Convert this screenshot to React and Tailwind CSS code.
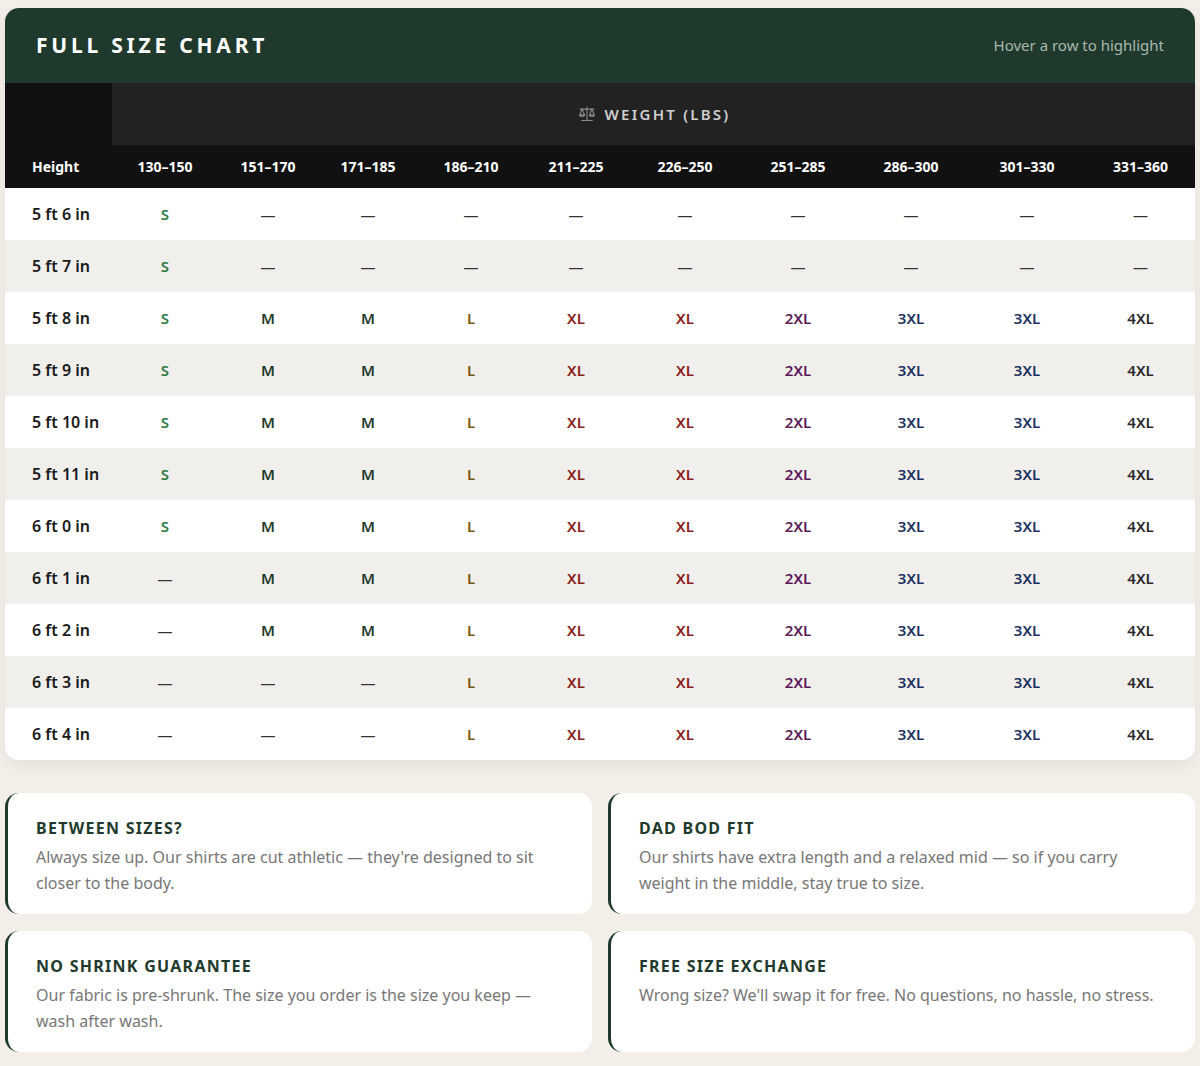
import React from "react";

const cols = ["130–150", "151–170", "171–185", "186–210", "211–225", "226–250", "251–285", "286–300", "301–330", "331–360"];
const widths = ["w-[106px]", "w-[100px]", "w-[100px]", "w-[106px]", "w-[104px]", "w-[114px]", "w-[112px]", "w-[114px]", "w-[118px]", "w-[109px]"];

const colour = {
  S: "text-[#2f7a45]",
  M: "text-[#1f3a2b]",
  L: "text-[#7a5510]",
  XL: "text-[#8a1c1c]",
  "2XL": "text-[#5b1a58]",
  "3XL": "text-[#1d3262]",
  "4XL": "text-[#2a2a2a]",
  "—": "text-[#333]",
};

const full = ["M", "M", "L", "XL", "XL", "2XL", "3XL", "3XL", "4XL"];
const rows = [
  ["5 ft 6 in", "S", ...Array(9).fill("—")],
  ["5 ft 7 in", "S", ...Array(9).fill("—")],
  ["5 ft 8 in", "S", ...full],
  ["5 ft 9 in", "S", ...full],
  ["5 ft 10 in", "S", ...full],
  ["5 ft 11 in", "S", ...full],
  ["6 ft 0 in", "S", ...full],
  ["6 ft 1 in", "—", ...full],
  ["6 ft 2 in", "—", ...full],
  ["6 ft 3 in", "—", "—", "—", "L", "XL", "XL", "2XL", "3XL", "3XL", "4XL"],
  ["6 ft 4 in", "—", "—", "—", "L", "XL", "XL", "2XL", "3XL", "3XL", "4XL"],
];

const notes = [
  ["BETWEEN SIZES?", "Always size up. Our shirts are cut athletic — they're designed to sit closer to the body."],
  ["DAD BOD FIT", "Our shirts have extra length and a relaxed mid — so if you carry weight in the middle, stay true to size."],
  ["NO SHRINK GUARANTEE", "Our fabric is pre-shrunk. The size you order is the size you keep — wash after wash."],
  ["FREE SIZE EXCHANGE", "Wrong size? We'll swap it for free. No questions, no hassle, no stress."],
];

const Scale = () => (
  <svg width="20" height="18" viewBox="0 0 24 22" fill="none" stroke="#8a8a8a" strokeWidth="1.4">
    <path d="M12 2v17M5 19h14M3 5h18M6 5l-3 7h6zM18 5l-3 7h6zM3 12a3 2 0 0 0 6 0M15 12a3 2 0 0 0 6 0" />
  </svg>
);

export default function App() {
  return (
    <div className="min-h-[1066px] bg-[#f3efe8] px-[5px] pt-[8px] font-['Inter','Noto_Sans',sans-serif]">
      <div className="overflow-hidden rounded-t-[14px] rounded-b-[14px] bg-white shadow-[0_6px_16px_rgba(0,0,0,0.06)]">
        <div className="flex h-[75px] items-center justify-between bg-[#1f3a2d] px-[31px]">
          <h1 className="font-['DejaVu_Sans_Condensed',sans-serif] text-[21px] font-bold tracking-[0.18em] text-white">FULL SIZE CHART</h1>
          <span className="text-[15px] text-[#a9b8ae]">Hover a row to highlight</span>
        </div>
        <table className="w-full border-collapse">
          <thead>
            <tr className="h-[62px]">
              <th className="w-[107px] bg-[#111]"></th>
              <th colSpan={10} className="bg-[#222]">
                <div className="flex items-center justify-center gap-2 text-[15px] font-semibold tracking-[0.15em] text-[#cfcfcf]">
                  <Scale /> WEIGHT (LBS)
                </div>
              </th>
            </tr>
            <tr className="h-[43px] bg-[#111] text-[14px] font-semibold text-white">
              <th className="pl-[27px] text-left">Height</th>
              {cols.map((c, i) => (
                <th key={c} className={`${widths[i]} text-center`}>{c}</th>
              ))}
            </tr>
          </thead>
          <tbody>
            {rows.map((r, i) => (
              <tr key={r[0]} className={`h-[52px] ${i % 2 ? "bg-[#f0efec]" : "bg-white"} hover:bg-[#e7efe9]`}>
                <td className="pl-[27px] text-[16px] font-semibold text-[#1a1a1a]">{r[0]}</td>
                {r.slice(1).map((v, j) => (
                  <td key={j} className={`text-center text-[15px] font-semibold ${colour[v]}`}>{v}</td>
                ))}
              </tr>
            ))}
          </tbody>
        </table>
      </div>
      <div className="mt-[33px] grid grid-cols-2 gap-x-4 gap-y-[17px]">
        {notes.map(([t, b]) => (
          <div key={t} className="h-[121px] rounded-[14px] border-l-[3px] border-[#1f3a2d] bg-white px-[28px] pt-[23px]">
            <h3 className="text-[16px] font-bold tracking-[0.08em] text-[#1f3a2d]">{t}</h3>
            <p className="mt-[4px] text-[16px] leading-[26px] text-[#777]">{b}</p>
          </div>
        ))}
      </div>
    </div>
  );
}
